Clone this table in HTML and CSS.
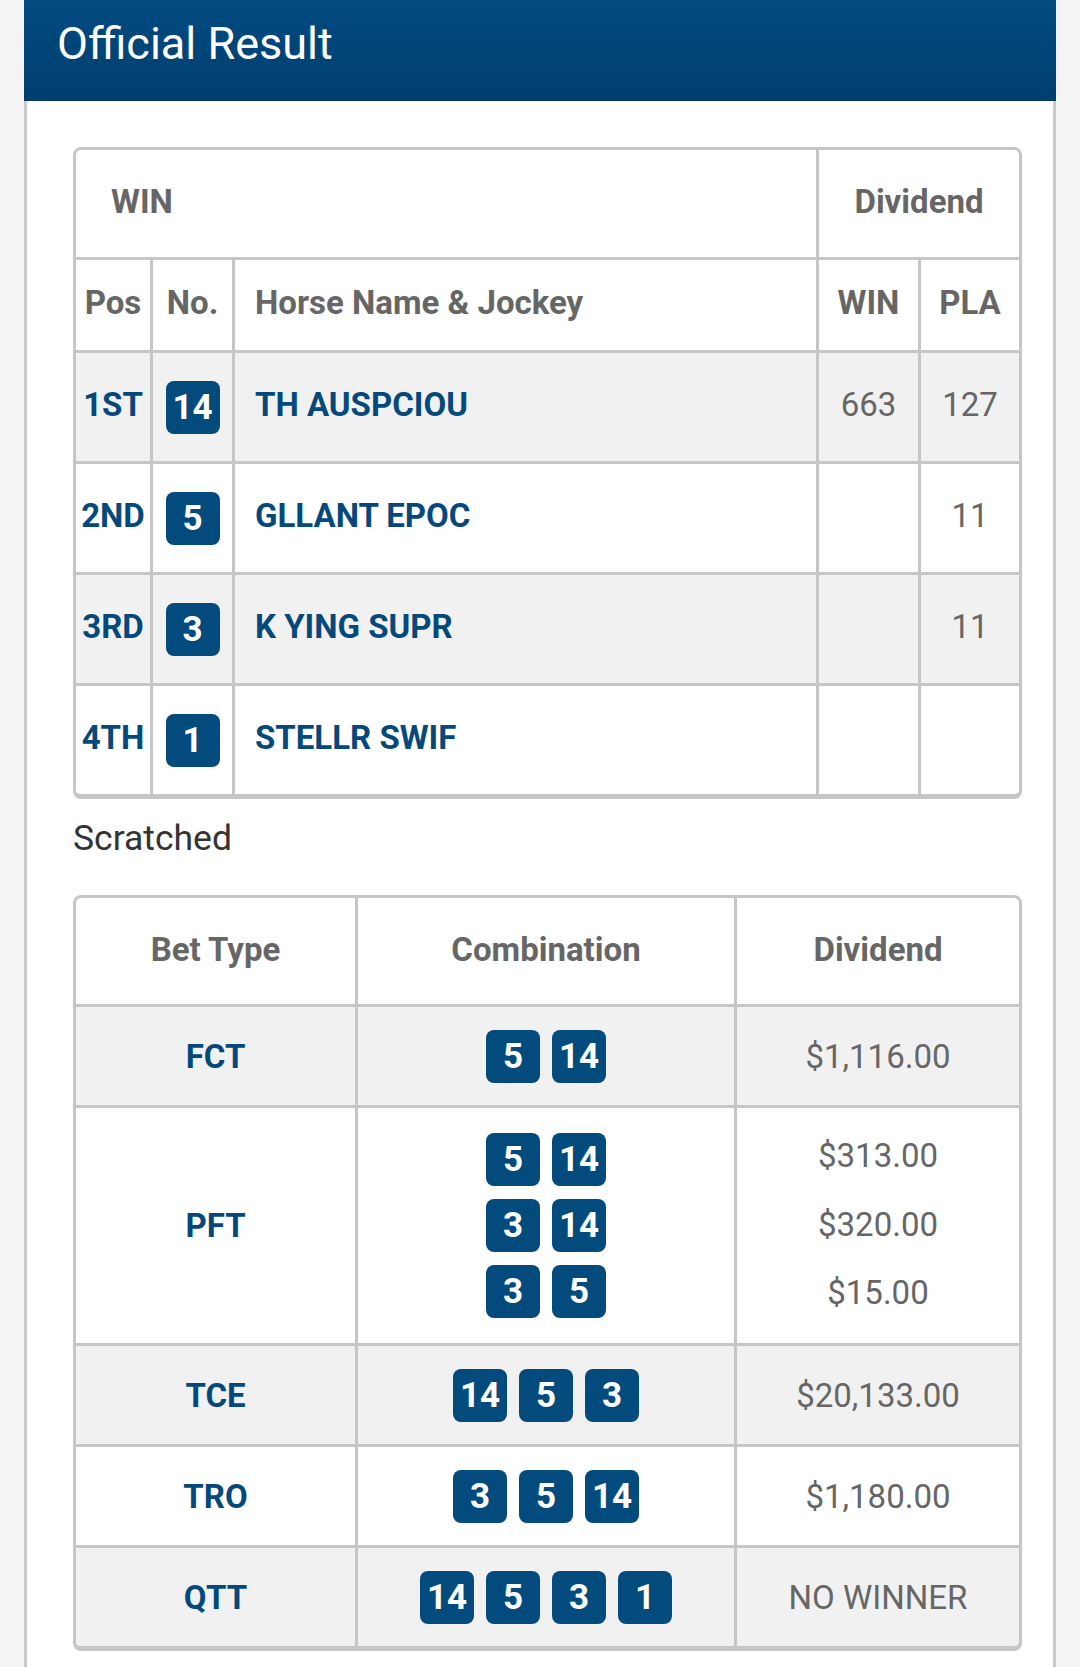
FILE: index.html
```html
<!DOCTYPE html>
<html lang="en">
<head>
<meta charset="utf-8">
<title>Official Result</title>
<link rel="stylesheet" href="styles.css">
</head>
<body>
<div class="panel">
  <div class="head">Official Result</div>
  <div class="body">
    <div class="tbl res">
      <div class="c h left span3">WIN</div>
      <div class="c h span2">Dividend</div>
      <div class="c h">Pos</div>
      <div class="c h">No.</div>
      <div class="c h left">Horse Name &amp; Jockey</div>
      <div class="c h">WIN</div>
      <div class="c h">PLA</div>

      <div class="c alt blue">1ST</div>
      <div class="c alt"><span class="badge">14</span></div>
      <div class="c alt blue left">TH AUSPCIOU</div>
      <div class="c alt val">663</div>
      <div class="c alt val">127</div>

      <div class="c blue">2ND</div>
      <div class="c"><span class="badge">5</span></div>
      <div class="c blue left">GLLANT EPOC</div>
      <div class="c val"></div>
      <div class="c val">11</div>

      <div class="c alt blue">3RD</div>
      <div class="c alt"><span class="badge">3</span></div>
      <div class="c alt blue left">K YING SUPR</div>
      <div class="c alt val"></div>
      <div class="c alt val">11</div>

      <div class="c blue">4TH</div>
      <div class="c"><span class="badge">1</span></div>
      <div class="c blue left">STELLR SWIF</div>
      <div class="c val"></div>
      <div class="c val"></div>
    </div>

    <div class="scr">Scratched</div>

    <div class="tbl pool">
      <div class="c h">Bet Type</div>
      <div class="c h">Combination</div>
      <div class="c h">Dividend</div>

      <div class="c alt blue">FCT</div>
      <div class="c alt"><div class="combo"><span class="badge">5</span><span class="badge">14</span></div></div>
      <div class="c alt val">$1,116.00</div>

      <div class="c blue">PFT</div>
      <div class="c">
        <div class="stack">
          <div class="combo"><span class="badge">5</span><span class="badge">14</span></div>
          <div class="combo"><span class="badge">3</span><span class="badge">14</span></div>
          <div class="combo"><span class="badge">3</span><span class="badge">5</span></div>
        </div>
      </div>
      <div class="c val">
        <div class="divs">
          <div>$313.00</div>
          <div>$320.00</div>
          <div>$15.00</div>
        </div>
      </div>

      <div class="c alt blue">TCE</div>
      <div class="c alt"><div class="combo"><span class="badge">14</span><span class="badge">5</span><span class="badge">3</span></div></div>
      <div class="c alt val">$20,133.00</div>

      <div class="c blue">TRO</div>
      <div class="c"><div class="combo"><span class="badge">3</span><span class="badge">5</span><span class="badge">14</span></div></div>
      <div class="c val">$1,180.00</div>

      <div class="c alt blue">QTT</div>
      <div class="c alt"><div class="combo"><span class="badge">14</span><span class="badge">5</span><span class="badge">3</span><span class="badge">1</span></div></div>
      <div class="c alt val">NO WINNER</div>
    </div>
  </div>
</div>
</body>
</html>
```

FILE: styles.css
```css
html, body {
  margin: 0;
  padding: 0;
}

body {
  background: #f4f4f4;
  font-family: Roboto, "Liberation Sans", Arial, sans-serif;
}

.panel {
  margin-left: 24px;
  width: 1032px;
  background: #ffffff;
}

.head {
  box-sizing: border-box;
  height: 101px;
  padding: 17px 0 0 33px;
  background: linear-gradient(#004b82, #003f6e);
  border-bottom: 1px solid #00385f;
  color: #ffffff;
  font-size: 45px;
  line-height: 53px;
  font-weight: 400;
}

.body {
  border-left: 3px solid #c9c9c9;
  border-right: 3px solid #c9c9c9;
  padding: 46px 31px 60px 46px;
}

.tbl {
  display: grid;
  gap: 3px;
  background: #c6c6c6;
  border: 3px solid #c6c6c6;
  border-bottom-width: 5px;
  border-radius: 8px;
  overflow: hidden;
}

.res {
  grid-template-columns: 74px 79px 1fr 99px 98px;
  grid-template-rows: 107px 90px repeat(4, 108px);
}

.pool {
  margin-top: 36px;
  grid-template-columns: 279px 376px 1fr;
  grid-template-rows: 106px 98px 235px 98px 98px 98px;
}

.c {
  background: #ffffff;
  display: flex;
  align-items: center;
  justify-content: center;
  font-size: 33px;
  line-height: 39px;
  color: #666666;
  white-space: nowrap;
  padding-bottom: 5px;
  box-sizing: border-box;
}

.pool .c {
  padding-bottom: 0;
}

.pool .c.h {
  padding-bottom: 4px;
}

.c.alt {
  background: #f1f1f1;
}

.c.h {
  font-weight: 700;
  color: #666666;
}

.c.left {
  justify-content: flex-start;
  padding-left: 20px;
}

.res .h.span3 {
  grid-column: span 3;
  padding-left: 35px;
}

.res .h.span2 {
  grid-column: span 2;
}

.c.blue {
  font-weight: 700;
  color: #05497c;
}

.c.val {
  font-weight: 400;
  color: #666666;
}

.badge {
  display: inline-flex;
  align-items: center;
  justify-content: center;
  width: 54px;
  height: 53px;
  border-radius: 8px;
  background: #034a7d;
  color: #ffffff;
  font-weight: 700;
  font-size: 35px;
  line-height: 53px;
}

.res .badge {
  margin-top: 5px;
}

.combo {
  display: flex;
  gap: 12px;
}

.stack {
  display: flex;
  flex-direction: column;
  gap: 13px;
}

.divs {
  display: flex;
  flex-direction: column;
  align-items: center;
  line-height: 68.5px;
  padding-bottom: 1px;
}

.scr {
  margin-top: 18px;
  font-size: 35.5px;
  line-height: 42px;
  color: #333333;
}
```
